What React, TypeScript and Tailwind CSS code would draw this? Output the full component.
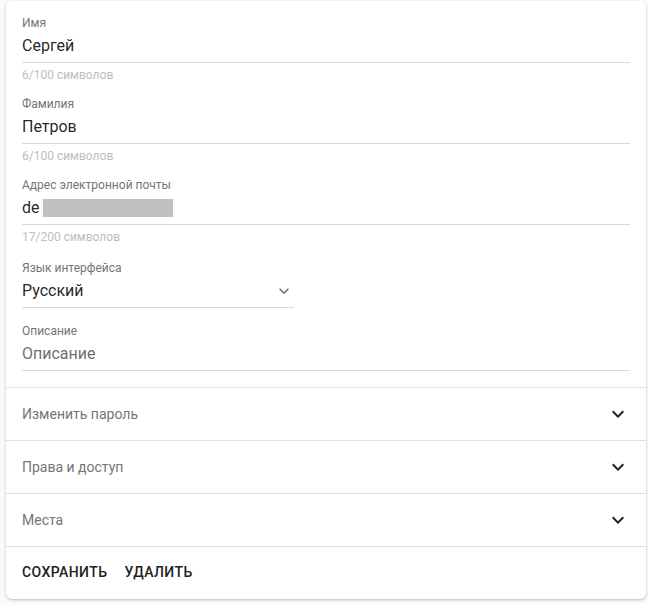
import React from 'react';

const font = { fontFamily: 'Roboto, "Noto Sans", sans-serif' };

const ExpandMore = ({ className }: { className?: string }) => (
  <svg viewBox="0 0 24 24" className={className} fill="currentColor">
    <path d="M16.59 8.59L12 13.17 7.41 8.59 6 10l6 6 6-6z" />
  </svg>
);

interface FieldProps {
  label: string;
  value?: React.ReactNode;
  placeholder?: string;
  helper?: string;
}

const TextField: React.FC<FieldProps> = ({ label, value, placeholder, helper }) => (
  <div className="flex flex-col">
    <div className="h-4 text-[12px] leading-4 text-[#757575]">{label}</div>
    <div className="mt-[3px] pb-1 border-b border-[#d9d9d9]">
      <div className={`h-6 text-[16px] leading-6 ${value ? 'text-[#000000de]' : 'text-[#6f6f6f]'}`}>
        {value ?? placeholder}
      </div>
    </div>
    {helper && <div className="mt-1 h-4 text-[12px] leading-4 text-[#bdbdbd]">{helper}</div>}
  </div>
);

const Section: React.FC<{ title: string }> = ({ title }) => (
  <div className="flex items-center justify-between h-[53px] pl-4 pr-4 border-t border-[#e0e0e0]">
    <span className="text-[14px] text-[#757575]">{title}</span>
    <ExpandMore className="w-6 h-6 text-[#212121]" />
  </div>
);

export default function App() {
  return (
    <div className="min-h-screen bg-[#fafafa] pt-px" style={font}>
      <div className="ml-[6px] w-[640px] bg-white rounded-[6px] shadow-[0_1px_3px_rgba(0,0,0,0.18),0_1px_2px_rgba(0,0,0,0.08)]">
        <div className="px-4 pt-[14px] pb-4">
          <div className="flex flex-col gap-[13px]">
            <TextField label="Имя" value="Сергей" helper="6/100 символов" />
            <TextField label="Фамилия" value="Петров" helper="6/100 символов" />
            <TextField
              label="Адрес электронной почты"
              value={
                <span className="flex items-center">
                  de
                  <span className="inline-block ml-[3px] w-[130px] h-[18px] bg-[#c1c1c1]" />
                </span>
              }
              helper="17/200 символов"
            />
          </div>

          <div className="mt-[15px] w-[272px]">
            <div className="h-4 text-[12px] leading-4 text-[#757575]">Язык интерфейса</div>
            <div className="mt-[3px] pb-1 border-b border-[#d9d9d9] flex items-center justify-between">
              <span className="h-6 text-[16px] leading-6 text-[#000000de]">Русский</span>
              <ExpandMore className="w-5 h-5 text-[#757575]" />
            </div>
          </div>

          <div className="mt-[15px]">
            <TextField label="Описание" placeholder="Описание" />
          </div>
        </div>

        <Section title="Изменить пароль" />
        <Section title="Права и доступ" />
        <Section title="Места" />

        <div className="flex items-center gap-[17px] h-[53px] px-4 border-t border-[#e0e0e0] pb-[2px]">
          <button className="text-[14px] font-medium uppercase tracking-[0.03em] text-[#212121]">Сохранить</button>
          <button className="text-[14px] font-medium uppercase tracking-[0.03em] text-[#212121]">Удалить</button>
        </div>
      </div>
    </div>
  );
}
